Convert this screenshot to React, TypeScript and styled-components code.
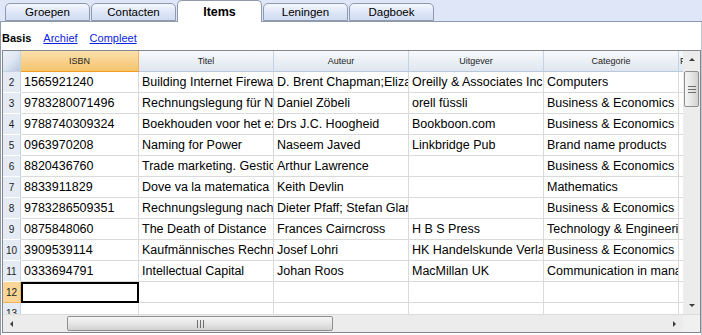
import React from 'react';
import styled, { createGlobalStyle } from 'styled-components';

const GlobalStyle = createGlobalStyle`
  html, body {
    margin: 0;
    padding: 0;
    background: #ffffff;
  }
  body {
    width: 702px;
    height: 335px;
    overflow: hidden;
    font-family: "Liberation Sans", Arial, sans-serif;
  }
`

const tabs = ['Groepen', 'Contacten', 'Items', 'Leningen', 'Dagboek']

const columns = [
  { title: 'ISBN', width: 118 },
  { title: 'Titel', width: 135 },
  { title: 'Auteur', width: 135 },
  { title: 'Uitgever', width: 135 },
  { title: 'Categorie', width: 135 },
  { title: 'Prijs', width: 135, left: true },
]

const rows = [
  ['1565921240', 'Building Internet Firewalls', 'D. Brent Chapman;Elizabeth D. Zwicky', 'Oreilly & Associates Inc', 'Computers'],
  ['9783280071496', 'Rechnungslegung für Nonprofit-Organisationen', 'Daniel Zöbeli', 'orell füssli', 'Business & Economics'],
  ['9788740309324', 'Boekhouden voor het examen', 'Drs J.C. Hoogheid', 'Bookboon.com', 'Business & Economics'],
  ['0963970208', 'Naming for Power', 'Naseem Javed', 'Linkbridge Pub', 'Brand name products'],
  ['8820436760', 'Trade marketing. Gestione', 'Arthur Lawrence', '', 'Business & Economics'],
  ['8833911829', 'Dove va la matematica', 'Keith Devlin', '', 'Mathematics'],
  ['9783286509351', 'Rechnungslegung nach IFRS', 'Dieter Pfaff; Stefan Glanz', '', 'Business & Economics'],
  ['0875848060', 'The Death of Distance', 'Frances Cairncross', 'H B S Press', 'Technology & Engineering'],
  ['3909539114', 'Kaufmännisches Rechnen', 'Josef Lohri', 'HK Handelskunde Verlag', 'Business & Economics'],
  ['0333694791', 'Intellectual Capital', 'Johan Roos', 'MacMillan UK', 'Communication in management'],
  ['', '', '', '', ''],
  ['', '', '', '', ''],
]

const gridTemplate = `18px ${columns.map(c => c.width + 'px').join(' ')}`

const Arrow = ({ dir }) => {
  const points = {
    up: '1,5 4,2 7,5',
    down: '1,2 4,5 7,2',
    left: '5,1 2,4 5,7',
    right: '2,1 5,4 2,7',
  }[dir]
  return (
    <svg width="8" height="8" viewBox="0 0 8 8">
      <polygon points={points} fill="#3c3c3c" />
    </svg>
  )
}

const Grip = ({ vertical }: { vertical?: boolean }) => (
  <svg width={vertical ? 8 : 7} height={vertical ? 7 : 8} viewBox={vertical ? '0 0 8 7' : '0 0 7 8'}>
    {[0, 3, 6].map(o =>
      vertical
        ? <rect key={o} x="0" y={o} width="8" height="1" fill="#6e6e6e" />
        : <rect key={o} x={o} y="0" width="1" height="8" fill="#6e6e6e" />
    )}
  </svg>
)

const App = () => {
  return (
    <Page>
      <GlobalStyle />
      <TabBar>
        {tabs.map(tab => (
          <Tab key={tab} active={tab === 'Items'}>{tab}</Tab>
        ))}
      </TabBar>

      <Content>
        <SubNav>
          <SubNavCurrent>Basis</SubNavCurrent>
          <SubNavLink>Archief</SubNavLink>
          <SubNavLink>Compleet</SubNavLink>
        </SubNav>

        <GridFrame>
          <GridMain>
            <Sheet>
              <HeaderRow>
                <CornerCell />
                {columns.map((col, index) => (
                  <HeaderCell key={col.title} selected={index === 0} left={col.left}>{col.title}</HeaderCell>
                ))}
              </HeaderRow>
              {rows.map((row, rowIndex) => {
                const rowNumber = rowIndex + 2
                const isCurrent = rowNumber === 12
                return (
                  <Row key={rowNumber}>
                    <RowNumber selected={isCurrent}>{rowNumber}</RowNumber>
                    {row.map((value, colIndex) => (
                      <Cell key={colIndex} active={isCurrent && colIndex === 0}>{value}</Cell>
                    ))}
                    <Cell />
                  </Row>
                )
              })}
            </Sheet>
            <VScroll>
              <ScrollButton><Arrow dir="up" /></ScrollButton>
              <VTrack>
                <VThumb><Grip vertical /></VThumb>
              </VTrack>
              <ScrollButton><Arrow dir="down" /></ScrollButton>
            </VScroll>
          </GridMain>
          <HScrollRow>
            <HScroll>
              <ScrollButton><Arrow dir="left" /></ScrollButton>
              <HTrack>
                <HThumb><Grip /></HThumb>
              </HTrack>
              <ScrollButton><Arrow dir="right" /></ScrollButton>
            </HScroll>
            <ScrollCorner />
          </HScrollRow>
        </GridFrame>
      </Content>
    </Page>
  );
};

const Page = styled.div`
  width: 702px;
  height: 335px;
  display: flex;
  flex-direction: column;
  background: #ffffff;
`

const TabBar = styled.div`
  height: 22px;
  flex: 0 0 22px;
  display: flex;
  align-items: flex-end;
  gap: 1px;
  padding-left: 5px;
  background: #dfe6f8;
  border-bottom: 1px solid #8e9aae;
  box-sizing: border-box;
`

const Tab = styled.div<{ active?: boolean }>`
  width: 85px;
  height: ${p => (p.active ? '22px' : '18px')};
  margin-bottom: ${p => (p.active ? '-1px' : '0')};
  box-sizing: border-box;
  border: 1px solid #8e9aae;
  border-bottom: ${p => (p.active ? 'none' : '1px solid #8e9aae')};
  border-radius: 5px 5px 0 0;
  background: ${p => (p.active
    ? 'linear-gradient(#ffffff, #ffffff)'
    : 'linear-gradient(#f4f7fd 0%, #dbe4f6 60%, #d3ddf3 100%)')};
  display: flex;
  align-items: center;
  justify-content: center;
  font-size: ${p => (p.active ? '12.5px' : '11.5px')};
  font-weight: ${p => (p.active ? 'bold' : 'normal')};
  color: #000;
  padding-top: ${p => (p.active ? '1px' : '0')};
`

const Content = styled.div`
  height: 313px;
  flex: 0 0 313px;
  display: flex;
  flex-direction: column;
  border-left: 1px solid #8e9aae;
  border-right: 1px solid #c0c6d0;
  padding: 0 0 1px 1px;
  box-sizing: border-box;
`

const SubNav = styled.div`
  height: 28px;
  flex: 0 0 28px;
  display: flex;
  align-items: center;
  gap: 12px;
  padding-top: 3px;
  box-sizing: border-box;
  font-size: 11px;
`

const SubNavCurrent = styled.span`
  font-weight: bold;
  color: #000;
`

const SubNavLink = styled.span`
  color: #0a24e0;
  text-decoration: underline;
`

const GridFrame = styled.div`
  height: 283px;
  flex: 0 0 283px;
  display: flex;
  flex-direction: column;
  border: 1px solid #828790;
  box-sizing: border-box;
  overflow: hidden;
`

const GridMain = styled.div`
  height: 263px;
  flex: 0 0 263px;
  display: flex;
  overflow: hidden;
`

const Sheet = styled.div`
  flex: 1;
  overflow: hidden;
  min-width: 0;
`

const HeaderRow = styled.div`
  display: grid;
  grid-template-columns: ${gridTemplate};
  height: 21px;
`

const CornerCell = styled.div`
  box-sizing: border-box;
  border-right: 1px solid #c6d3e3;
  border-bottom: 1px solid #c6d3e3;
  background: linear-gradient(135deg, #eef2f9 0%, #dde6f3 50%, #b9c9df 100%);
`

const HeaderCell = styled.div<{ selected?: boolean; left?: boolean }>`
  box-sizing: border-box;
  border-right: 1px solid ${p => (p.selected ? '#f0b25a' : '#c5d2e2')};
  border-bottom: 1px solid ${p => (p.selected ? '#f29b20' : '#b8c9dd')};
  background: ${p => (p.selected
    ? 'linear-gradient(#fae1ad 0%, #f8d08a 55%, #f6c46c 100%)'
    : 'linear-gradient(#f7f9fc 0%, #eaeff6 55%, #dfe6ef 100%)')};
  display: flex;
  align-items: center;
  justify-content: ${p => (p.left ? 'flex-start' : 'center')};
  padding-left: ${p => (p.left ? '1px' : '0')};
  font-size: 9px;
  color: #222;
  white-space: nowrap;
  overflow: hidden;
`

const Row = styled.div`
  display: grid;
  grid-template-columns: ${gridTemplate};
  height: 21px;
`

const RowNumber = styled.div<{ selected?: boolean }>`
  box-sizing: border-box;
  border-right: 1px solid ${p => (p.selected ? '#f0b25a' : '#c6d3e3')};
  border-bottom: 1px solid ${p => (p.selected ? '#f0b25a' : '#ffffff')};
  background: ${p => (p.selected ? '#f9d596' : '#e4ebf5')};
  display: flex;
  align-items: center;
  justify-content: center;
  font-size: 10px;
  color: #222;
`

const Cell = styled.div<{ active?: boolean }>`
  box-sizing: border-box;
  border-right: 1px solid #dadada;
  border-bottom: 1px solid #dadada;
  outline: ${p => (p.active ? '2px solid #000' : 'none')};
  outline-offset: -2px;
  padding: 0 0 0 3px;
  font-size: 12.5px;
  line-height: 20px;
  color: #000;
  white-space: nowrap;
  overflow: hidden;
  background: #fff;
`

const VScroll = styled.div`
  width: 17px;
  flex: 0 0 17px;
  display: flex;
  flex-direction: column;
  background: #ececec;
`

const ScrollButton = styled.div`
  width: 17px;
  height: 17px;
  flex: 0 0 17px;
  display: flex;
  align-items: center;
  justify-content: center;
`

const VTrack = styled.div`
  flex: 1;
  padding-top: 3px;
  display: flex;
  flex-direction: column;
  align-items: center;
`

const VThumb = styled.div`
  width: 15px;
  height: 36px;
  box-sizing: border-box;
  border: 1px solid #8f8f8f;
  border-radius: 2px;
  background: linear-gradient(90deg, #f5f5f5 0%, #e6e6e6 50%, #d2d2d2 100%);
  display: flex;
  align-items: center;
  justify-content: center;
`

const HScrollRow = styled.div`
  height: 18px;
  flex: 0 0 18px;
  display: flex;
  border-top: 1px solid #dcdcdc;
  box-sizing: border-box;
`

const HScroll = styled.div`
  flex: 1;
  display: flex;
  background: #ececec;
`

const HTrack = styled.div`
  flex: 1;
  padding-left: 47px;
  display: flex;
  align-items: center;
`

const HThumb = styled.div`
  width: 266px;
  height: 15px;
  box-sizing: border-box;
  border: 1px solid #8f8f8f;
  border-radius: 2px;
  background: linear-gradient(#f5f5f5 0%, #e6e6e6 50%, #d2d2d2 100%);
  display: flex;
  align-items: center;
  justify-content: center;
`

const ScrollCorner = styled.div`
  width: 17px;
  flex: 0 0 17px;
  background: #f0f0f0;
`

export default App
